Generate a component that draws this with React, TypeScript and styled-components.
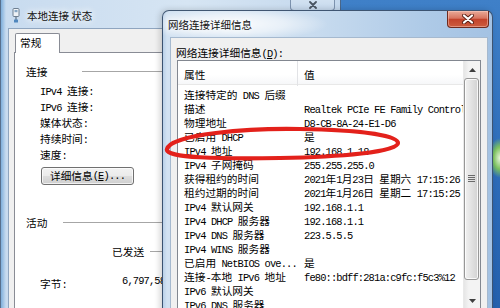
import React from "react";
import styled, { createGlobalStyle } from "styled-components";

const Global = createGlobalStyle`
  html, body { margin: 0; padding: 0; }
  body {
    width: 500px;
    height: 308px;
    overflow: hidden;
    font-family: "Noto Sans CJK SC", sans-serif;
    color: #000;
  }
  * { box-sizing: border-box; }
`;

const Desktop = styled.div`
  position: relative;
  width: 500px;
  height: 308px;
  overflow: hidden;
  background:
    radial-gradient(ellipse 12px 20px at 500px 158px, #e8f6dc 0%, #7cc25e 55%, rgba(60, 140, 90, 0) 100%),
    linear-gradient(180deg, #3f80c8 0%, #2d6cb9 55%, #2460ad 100%);
`;

/* ---------- mixed CJK / half-width text ---------- */
const Han = styled.span`
  font-family: "Noto Sans CJK SC", sans-serif;
  font-size: 10.7px;
`;
const Lat = styled.span`
  font-family: "Liberation Mono", monospace;
  font-size: 10.4px;
  letter-spacing: -0.85px;
  white-space: pre;
`;

function Mixed({ text }: { text: string }) {
  const parts = text.match(/[\x00-\x7F]+|[^\x00-\x7F]+/g) || [];
  return (
    <>
      {parts.map((p, i) =>
        /^[\x00-\x7F]/.test(p) ? <Lat key={i}>{p}</Lat> : <Han key={i}>{p}</Han>
      )}
    </>
  );
}

/* ---------- shared window chrome ---------- */
const TitleText = styled.span`
  font-family: "Noto Sans CJK SC", sans-serif;
  font-size: 10.5px;
  color: #111;
  white-space: pre;
  text-shadow: 0 0 6px #fff, 0 0 10px #fff;
`;

const CloseGlyph = () => (
  <svg width="12" height="10" viewBox="0 0 12 10">
    <path d="M2 1.5 L10 8.5 M10 1.5 L2 8.5" stroke="#5a2015" strokeWidth="4" strokeLinecap="round" />
    <path d="M2 1.5 L10 8.5 M10 1.5 L2 8.5" stroke="#fff" strokeWidth="2.2" strokeLinecap="round" />
  </svg>
);

const InactiveCloseGlyph = () => (
  <svg width="10" height="8" viewBox="0 0 10 8">
    <path d="M2 1 L8 7 M8 1 L2 7" stroke="#4a5562" strokeWidth="1.8" strokeLinecap="round" />
  </svg>
);

/* ---------- back window: 本地连接 状态 ---------- */
const BackWindow = styled.div`
  position: absolute;
  left: 0;
  top: -8px;
  width: 341px;
  height: 330px;
  border: 1px solid rgba(52, 78, 110, 0.75);
  border-radius: 7px;
  background: linear-gradient(90deg, #7fafdc 0px, #c8dbef 5px, #d6e5f3 55%, #c4d8ed 100%);
  display: flex;
  flex-direction: column;
`;

const BackTitleBar = styled.div`
  height: 35px;
  padding: 9px 0 0 11px;
  display: flex;
  align-items: center;
  gap: 7px;
`;

const BackClose = styled.div`
  position: absolute;
  top: 0;
  right: 5px;
  width: 45px;
  height: 18px;
  border: 1px solid rgba(70, 95, 130, 0.6);
  border-top: none;
  border-radius: 0 0 4px 4px;
  background: linear-gradient(180deg, #dae7f4 0%, #c6d9ed 100%);
  display: flex;
  align-items: center;
  justify-content: center;
  padding-top: 6px;
`;

const BackClient = styled.div`
  flex: 1;
  margin: 0 7px;
  background: #f0f0f0;
  border: 1px solid #8fa5bf;
  padding: 4px 0 0 5px;
  display: flex;
  flex-direction: column;
`;

const TabStrip = styled.div`
  display: flex;
  padding-left: 1px;
  height: 20px;
  margin-bottom: -1px;
  position: relative;
  z-index: 1;
`;

const Tab = styled.div`
  width: 45px;
  height: 20px;
  background: #fff;
  border: 1px solid #898c95;
  border-bottom: none;
  border-radius: 2px 2px 0 0;
  padding-left: 4px;
  line-height: 18px;
  font-size: 10.7px;
`;

const TabPanel = styled.div`
  flex: 1;
  background: #fff;
  border: 1px solid #898c95;
  padding: 11px 0 0 11px;
  display: flex;
  flex-direction: column;
`;

const SectionHead = styled.div<{ $gap: number }>`
  display: flex;
  align-items: center;
  height: 16px;
  line-height: 16px;
  margin-top: ${(p) => (p.$gap ? "30px" : "0")};
`;

const Rule = styled.div<{ $offset: number }>`
  flex: 1;
  height: 2px;
  margin-left: ${(p) => p.$offset}px;
  border-top: 1px solid #a6a6a6;
  border-bottom: 1px solid #fff;
`;

const InfoRows = styled.div`
  padding-left: 14px;
  display: flex;
  flex-direction: column;
`;

const InfoRow = styled.div`
  height: 16px;
  line-height: 16px;
  white-space: nowrap;
`;

const DetailsButton = styled.div`
  margin: 7px 0 0 15px;
  width: 93px;
  height: 18px;
  border: 1px solid #707070;
  border-radius: 3px;
  background: linear-gradient(180deg, #f2f2f2 0%, #ebebeb 48%, #dddddd 52%, #cfcfcf 100%);
  box-shadow: inset 0 0 0 1px rgba(255, 255, 255, 0.7);
  display: flex;
  align-items: center;
  justify-content: center;
  line-height: 16px;
  white-space: nowrap;
`;

const SentRow = styled.div`
  margin-top: 13px;
  padding-left: 86px;
  display: flex;
  align-items: center;
  height: 16px;
  line-height: 16px;
`;

const BytesRow = styled.div`
  margin-top: 13px;
  padding-left: 14px;
  display: flex;
  height: 16px;
  line-height: 16px;
  white-space: nowrap;
`;

const BytesLabel = styled.div`
  width: 82px;
`;

const AdapterIcon = () => (
  <svg width="8" height="15" viewBox="0 0 8 15">
    <rect x="1" y="0.5" width="6" height="8" rx="1" fill="#eef2f6" stroke="#6d7e90" />
    <rect x="2.5" y="2" width="3" height="2.2" fill="#86a6c4" />
    <path d="M4 8.5 V13" stroke="#6d7e90" strokeWidth="1.4" />
    <rect x="2" y="11.5" width="4" height="3" rx="0.5" fill="#4f86bd" />
  </svg>
);

/* ---------- front window: 网络连接详细信息 ---------- */
const FrontWindow = styled.div`
  position: absolute;
  left: 162px;
  top: 10px;
  width: 331px;
  height: 320px;
  border: 1px solid rgba(40, 62, 92, 0.85);
  border-radius: 7px 7px 0 0;
  background: linear-gradient(90deg, #b9d0e8 0px, #d2e2f2 4px, #c9dcef 45%, #aecae7 80%, #a4c2e3 100%);
  box-shadow: -2px 0 6px rgba(0, 0, 0, 0.18);
  display: flex;
  flex-direction: column;
`;

const FrontTitleBar = styled.div`
  height: 26px;
  padding-left: 5px;
  display: flex;
  align-items: center;
  background: radial-gradient(ellipse 95px 17px at 70px 13px, rgba(255, 255, 255, 0.9) 0%, rgba(255, 255, 255, 0.55) 55%, rgba(255, 255, 255, 0) 100%);
`;

const FrontClose = styled.div`
  position: absolute;
  top: 0;
  right: 3px;
  width: 42px;
  height: 17px;
  border: 1px solid #6e2a1e;
  border-top: none;
  border-radius: 0 0 4px 4px;
  background: linear-gradient(180deg, #e9aa98 0%, #d87560 45%, #c3432b 52%, #cc5c3e 100%);
  box-shadow: inset 0 0 0 1px rgba(255, 210, 200, 0.45);
  display: flex;
  align-items: center;
  justify-content: center;
`;

const FrontClient = styled.div`
  flex: 1;
  margin: 0 4px 0 7px;
  background: #f0f0f0;
  border: 1px solid #a5b9cf;
  padding: 5px 6px 0 6px;
  display: flex;
  flex-direction: column;
`;

const ListLabel = styled.div`
  height: 14px;
  line-height: 14px;
  margin-bottom: 3px;
  margin-left: -1px;
  white-space: nowrap;
`;

const ListBox = styled.div`
  width: 304px;
  height: 250px;
  border: 1px solid #828790;
  background: #fff;
  display: flex;
`;

const Columns = styled.div`
  flex: 1;
  min-width: 0;
  display: flex;
  flex-direction: column;
  overflow-x: clip;
`;

const HeaderRow = styled.div`
  height: 24px;
  flex-shrink: 0;
  display: grid;
  grid-template-columns: 120px 1fr;
  border-bottom: 1px solid #e8e8e8;
  background: linear-gradient(180deg, #ffffff 0%, #ffffff 60%, #f6f7f9 100%);
`;

const HeaderCell = styled.div<{ $divider?: boolean }>`
  padding-left: 6px;
  line-height: 23px;
  border-right: ${(p) => (p.$divider ? "1px solid #e2e3e6" : "none")};
`;

const DataRow = styled.div`
  height: 14px;
  flex-shrink: 0;
  display: grid;
  grid-template-columns: 120px 1fr;
  line-height: 14px;
`;

const Cell = styled.div`
  padding-left: 6px;
  white-space: nowrap;
  overflow-x: clip;
  overflow-y: visible;
  min-width: 0;
`;

const ScrollBar = styled.div`
  width: 17px;
  flex-shrink: 0;
  display: flex;
  flex-direction: column;
  background: linear-gradient(90deg, #e6e6e6 0%, #f3f3f3 30%, #f3f3f3 100%);
  border-left: 1px solid #e9e9e9;
`;

const ScrollBtn = styled.div`
  height: 17px;
  display: flex;
  align-items: center;
  justify-content: center;
`;

const Track = styled.div`
  flex: 1;
  display: flex;
  flex-direction: column;
`;

const Thumb = styled.div`
  height: 202px;
  margin: 0 1px 0 0;
  border: 1px solid #979797;
  border-radius: 3px;
  background: linear-gradient(90deg, #f1f1f1 0%, #e3e3e3 45%, #d2d2d2 100%);
  box-shadow: inset 0 0 0 1px rgba(255, 255, 255, 0.8);
  display: flex;
  align-items: center;
  justify-content: center;
`;

const Grip = () => (
  <svg width="7" height="8" viewBox="0 0 7 8">
    {[0.5, 2.5, 4.5, 6.5].map((y) => (
      <line key={y} x1="0" x2="7" y1={y} y2={y} stroke="#6a6a6a" strokeWidth="1" />
    ))}
  </svg>
);

const Arrow = ({ down }: { down?: boolean }) => (
  <svg width="7" height="4" viewBox="0 0 7 4">
    <path d={down ? "M0 0 H7 L3.5 4 Z" : "M0 4 H7 L3.5 0 Z"} fill="#3f3f3f" />
  </svg>
);

const Annotation = styled.svg`
  position: absolute;
  left: 0;
  top: 0;
  pointer-events: none;
`;

const rows: [string, string][] = [
  ["连接特定的 DNS 后缀", ""],
  ["描述", "Realtek PCIe FE Family Controller"],
  ["物理地址", "D8-CB-8A-24-E1-D6"],
  ["已启用 DHCP", "是"],
  ["IPv4 地址", "192.168.1.18"],
  ["IPv4 子网掩码", "255.255.255.0"],
  ["获得租约的时间", "2021年1月23日 星期六 17:15:26"],
  ["租约过期的时间", "2021年1月26日 星期二 17:15:25"],
  ["IPv4 默认网关", "192.168.1.1"],
  ["IPv4 DHCP 服务器", "192.168.1.1"],
  ["IPv4 DNS 服务器", "223.5.5.5"],
  ["IPv4 WINS 服务器", ""],
  ["已启用 NetBIOS ove...", "是"],
  ["连接-本地 IPv6 地址", "fe80::bdff:281a:c9fc:f5c3%12"],
  ["IPv6 默认网关", ""],
  ["IPv6 DNS 服务器", ""],
];

const statusRows = ["IPv4 连接:", "IPv6 连接:", "媒体状态:", "持续时间:", "速度:"];

export default function App() {
  return (
    <>
      <Global />
      <Desktop>
        <BackWindow>
          <BackTitleBar>
            <AdapterIcon />
            <TitleText>本地连接 状态</TitleText>
          </BackTitleBar>
          <BackClose>
            <InactiveCloseGlyph />
          </BackClose>
          <BackClient>
            <TabStrip>
              <Tab>常规</Tab>
            </TabStrip>
            <TabPanel>
              <SectionHead $gap={0}>
                <Han>连接</Han>
                <Rule $offset={35} />
              </SectionHead>
              <InfoRows>
                {statusRows.map((r) => (
                  <InfoRow key={r}>
                    <Mixed text={r} />
                  </InfoRow>
                ))}
              </InfoRows>
              <DetailsButton>
                <Han>详细信息</Han>
                <Lat>
                  (<u>E</u>)...
                </Lat>
              </DetailsButton>
              <SectionHead $gap={1}>
                <Han>活动</Han>
                <Rule $offset={16} />
              </SectionHead>
              <SentRow>
                <Han>已发送</Han>
                <Rule $offset={6} />
              </SentRow>
              <BytesRow>
                <BytesLabel>
                  <Mixed text="字节:" />
                </BytesLabel>
                <Lat>6,797,589</Lat>
              </BytesRow>
            </TabPanel>
          </BackClient>
        </BackWindow>

        <FrontWindow>
          <FrontTitleBar>
            <TitleText>网络连接详细信息</TitleText>
          </FrontTitleBar>
          <FrontClose>
            <CloseGlyph />
          </FrontClose>
          <FrontClient>
            <ListLabel>
              <Han>网络连接详细信息</Han>
              <Lat>
                (<u>D</u>):
              </Lat>
            </ListLabel>
            <ListBox>
              <Columns>
                <HeaderRow>
                  <HeaderCell $divider>
                    <Han>属性</Han>
                  </HeaderCell>
                  <HeaderCell>
                    <Han>值</Han>
                  </HeaderCell>
                </HeaderRow>
                {rows.map(([k, v]) => (
                  <DataRow key={k}>
                    <Cell>
                      <Mixed text={k} />
                    </Cell>
                    <Cell>
                      <Mixed text={v} />
                    </Cell>
                  </DataRow>
                ))}
              </Columns>
              <ScrollBar>
                <ScrollBtn>
                  <Arrow />
                </ScrollBtn>
                <Track>
                  <Thumb>
                    <Grip />
                  </Thumb>
                </Track>
                <ScrollBtn>
                  <Arrow down />
                </ScrollBtn>
              </ScrollBar>
            </ListBox>
          </FrontClient>
        </FrontWindow>

        <Annotation width="500" height="308" viewBox="0 0 500 308">
          <path
            d="M167 149 C170 134 250 128 300 129 C360 130 398 135 398 143 C398 152 340 157 280 158 C220 159 164 158 167 149 Z"
            fill="none"
            stroke="#e3211b"
            strokeWidth="4.2"
          />
        </Annotation>
      </Desktop>
    </>
  );
}
